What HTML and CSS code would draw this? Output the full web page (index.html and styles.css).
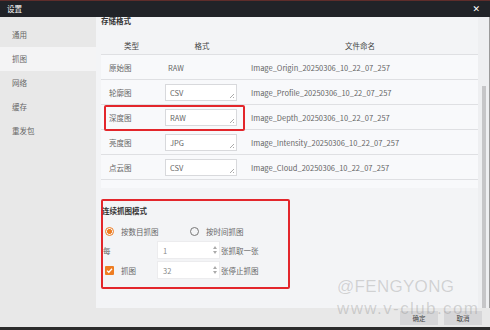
FILE: index.html
```html
<!DOCTYPE html>
<html lang="zh-CN">
<head>
    <meta charset="UTF-8">
    <title>设置</title>
    <link rel="stylesheet" href="styles.css">
</head>
<body>
    <div class="window">
        <div class="titlebar">
            <span class="title">设置</span>
            <span class="close">✕</span>
        </div>

        <div class="body">
            <ul class="nav">
                <li>通用</li>
                <li class="active">抓图</li>
                <li>网络</li>
                <li>缓存</li>
                <li>重发包</li>
            </ul>

            <div class="panel">
                <h2 class="section-title">存储格式</h2>

                <div class="format-table">
                    <div class="row head">
                        <div class="cell c-type">类型</div>
                        <div class="cell c-fmt">格式</div>
                        <div class="cell c-name">文件命名</div>
                    </div>
                    <div class="row">
                        <div class="cell c-type">原始图</div>
                        <div class="cell c-fmt"><span class="plain">RAW</span></div>
                        <div class="cell c-name">Image_Origin_20250306_10_22_07_257</div>
                    </div>
                    <div class="row">
                        <div class="cell c-type">轮廓图</div>
                        <div class="cell c-fmt"><span class="field">CSV</span></div>
                        <div class="cell c-name">Image_Profile_20250306_10_22_07_257</div>
                    </div>
                    <div class="row marked">
                        <div class="cell c-type">深度图</div>
                        <div class="cell c-fmt"><span class="field">RAW</span></div>
                        <div class="cell c-name">Image_Depth_20250306_10_22_07_257</div>
                        <div class="mark"></div>
                    </div>
                    <div class="row">
                        <div class="cell c-type">亮度图</div>
                        <div class="cell c-fmt"><span class="field">JPG</span></div>
                        <div class="cell c-name">Image_Intensity_20250306_10_22_07_257</div>
                    </div>
                    <div class="row">
                        <div class="cell c-type">点云图</div>
                        <div class="cell c-fmt"><span class="field">CSV</span></div>
                        <div class="cell c-name">Image_Cloud_20250306_10_22_07_257</div>
                    </div>
                </div>

                <div class="capture-mode">
                    <h3 class="mode-title">连续抓图模式</h3>
                    <div class="radio-row">
                        <label class="radio checked"><span class="dot"></span>按数目抓图</label>
                        <label class="radio"><span class="dot"></span>按时间抓图</label>
                    </div>
                    <div class="spin-row">
                        <span class="spin-label">每</span>
                        <span class="spin"><span class="value">1</span><span class="arrows"><i class="up"></i><i class="down"></i></span></span>
                        <span class="suffix">张抓取一张</span>
                    </div>
                    <div class="spin-row">
                        <span class="spin-label">
                            <svg class="check" width="9" height="9" viewBox="0 0 9 9">
                                <rect width="9" height="9" rx="1" fill="#ee7d22"/>
                                <path d="M2 4.6 L3.8 6.3 L7 2.8" fill="none" stroke="#fff" stroke-width="1.3"/>
                            </svg>
                            抓图
                        </span>
                        <span class="spin"><span class="value">32</span><span class="arrows"><i class="up"></i><i class="down"></i></span></span>
                        <span class="suffix">张停止抓图</span>
                    </div>
                </div>
            </div>

            <div class="scrollbar"><div class="thumb"></div></div>
        </div>

        <div class="footer">
            <button class="btn">确定</button>
            <button class="btn">取消</button>
        </div>

        <div class="watermark">
            <div class="wm-name">@FENGYONG</div>
            <div class="wm-site">www.v-club.com</div>
        </div>
    </div>
</body>
</html>
```

FILE: styles.css
```css
body {
    margin: 0;
    font-family: "Noto Sans CJK SC", "Noto Sans", sans-serif;
    font-size: 7.5px;
    color: #666;
    background-color: #2a2a2a;
}

.window {
    position: relative;
    width: 490px;
    height: 330px;
    background-color: #e8e8e8;
    overflow: hidden;
}

.titlebar {
    height: 16px;
    border-top: 1px solid #5e2d2b;
    background-color: #212328;
    display: flex;
    align-items: center;
    justify-content: space-between;
    padding: 0 10px 0 7px;
    color: #fff;
}

.title {
    font-size: 7.5px;
    line-height: 12px;
}

.close {
    font-size: 9px;
    line-height: 12px;
    font-family: "DejaVu Sans", sans-serif;
}

.body {
    display: flex;
    height: 291px;
}

.nav {
    list-style: none;
    margin: 0;
    padding: 6px 0 0 0;
    width: 96px;
    flex: none;
}

.nav li {
    height: 24px;
    line-height: 24px;
    padding-left: 12px;
    color: #666;
}

.nav li.active {
    background-color: #f4f4f5;
}

.panel {
    width: 382px;
    flex: none;
    background-color: #f3f4f6;
    padding-left: 5px;
    box-sizing: border-box;
    overflow: hidden;
}

.section-title {
    margin: -2px 0 0 0;
    height: 11px;
    line-height: 11px;
    font-size: 7.5px;
    font-weight: bold;
    color: #333;
}

.format-table {
    margin-top: 10px;
    padding-bottom: 8px;
    background-color: #f8f9fb;
}

.row {
    position: relative;
    display: grid;
    grid-template-columns: 61px 80px 1fr;
    height: 24px;
    border-bottom: 1px solid #dfe0e3;
    align-items: center;
}

.row.head {
    height: 18px;
    background-color: #f3f4f6;
    color: #444;
}

.row.head .cell {
    text-align: center;
    padding: 0;
}

.c-type {
    padding-left: 8px;
}

.c-name {
    padding-left: 9px;
    white-space: nowrap;
}

.plain {
    margin-left: 6px;
}

.field {
    position: relative;
    display: block;
    width: 72px;
    height: 17px;
    margin-left: 3px;
    box-sizing: border-box;
    border: 1px solid #d8d9dc;
    background-color: #fff;
    line-height: 15px;
    padding-left: 4px;
}

.field::after {
    content: "";
    position: absolute;
    right: 2px;
    bottom: 2px;
    width: 4px;
    height: 4px;
    background: linear-gradient(135deg, transparent 50%, #aaa 50%, #aaa 62%, transparent 62%, transparent 78%, #aaa 78%);
}

.mark {
    position: absolute;
    left: 3px;
    top: 0;
    width: 141px;
    height: 26px;
    box-sizing: border-box;
    border: 2px solid #e3262b;
    border-radius: 2px;
}

.capture-mode {
    margin-top: 11px;
    width: 189px;
    height: 90px;
    box-sizing: border-box;
    border: 2px solid #e3262b;
    border-radius: 2px;
    padding-top: 4px;
}

.mode-title {
    margin: 0 0 0 -1px;
    height: 12px;
    line-height: 12px;
    font-size: 7.5px;
    font-weight: bold;
    color: #333;
}

.radio-row {
    display: flex;
    margin-top: 8px;
    height: 12px;
    align-items: center;
}

.radio {
    display: flex;
    align-items: center;
    gap: 7px;
    margin-left: 2px;
    width: 83px;
}

.radio .dot {
    width: 9px;
    height: 9px;
    box-sizing: border-box;
    border: 1px solid #777;
    border-radius: 50%;
}

.radio.checked .dot {
    border-color: #ee7d22;
    background: radial-gradient(circle, #ee7d22 0 2.2px, transparent 2.6px);
}

.spin-row {
    display: flex;
    align-items: center;
    margin-top: 4px;
    height: 18px;
}

.spin-row + .spin-row {
    margin-top: 2px;
}

.spin-label {
    display: flex;
    align-items: center;
    gap: 7px;
    width: 54px;
    margin-left: -1px;
    padding-left: 1px;
}

.spin-row .check {
    margin-left: 2px;
}

.spin {
    display: flex;
    align-items: center;
    justify-content: space-between;
    width: 63px;
    height: 18px;
    box-sizing: border-box;
    background-color: #fff;
    border: 1px solid #ececee;
    padding: 0 2px 0 5px;
    color: #888;
}

.arrows {
    display: flex;
    flex-direction: column;
    gap: 2px;
}

.arrows i {
    width: 0;
    height: 0;
    border-left: 2px solid transparent;
    border-right: 2px solid transparent;
}

.arrows .up {
    border-bottom: 3px solid #aaa;
}

.arrows .down {
    border-top: 3px solid #aaa;
}

.suffix {
    margin-left: 1px;
}

.scrollbar {
    position: relative;
    flex: 1;
    background-color: #eeeff1;
    border-right: 1px solid #9a9a9a;
}

.scrollbar .thumb {
    position: absolute;
    left: 4px;
    top: 69px;
    bottom: 0;
    width: 4px;
    background-color: #c6c6c8;
}

.footer {
    height: 19px;
    display: flex;
    justify-content: flex-end;
    align-items: center;
    gap: 6px;
    padding-right: 8px;
    border-bottom: 3px solid #2b2b2b;
}

.btn {
    width: 38px;
    height: 14px;
    padding: 0;
    border: none;
    background-color: #d6d6d8;
    color: #444;
    font-family: "Noto Sans CJK SC", sans-serif;
    font-size: 6.5px;
}

.watermark {
    position: absolute;
    left: 337px;
    top: 277px;
    font-family: "Liberation Sans", Arial, sans-serif;
    color: rgba(120, 120, 120, 0.28);
    line-height: 20px;
}

.wm-name {
    font-size: 17px;
    letter-spacing: 0.3px;
}

.wm-site {
    font-size: 17px;
    letter-spacing: 1.4px;
    margin-top: 2px;
}
```
